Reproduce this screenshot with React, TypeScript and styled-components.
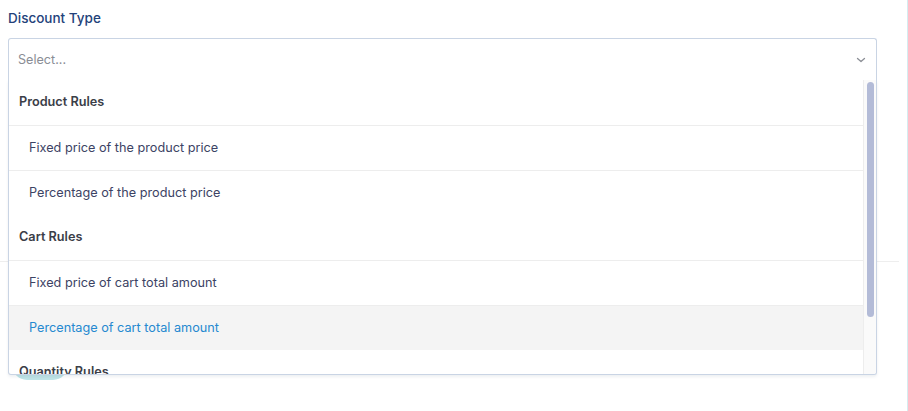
import styled, { createGlobalStyle } from "styled-components";

const GlobalStyle = createGlobalStyle`
  html, body {
    margin: 0;
    padding: 0;
    background: #ffffff;
  }
  body {
    font-family: Inter, "Liberation Sans", Arial, sans-serif;
    -webkit-font-smoothing: antialiased;
  }
`;

const Page = styled.div`
  width: 908px;
  height: 411px;
  box-sizing: border-box;
  padding: 8px 0 0 8px;
  border-right: 1px solid #d5ecf0;
  overflow: hidden;
`;

const Field = styled.div`
  width: 869px;
  display: flex;
  flex-direction: column;
  gap: 10px;
`;

const Label = styled.label`
  font-size: 13.5px;
  line-height: 20px;
  font-weight: 500;
  color: #23427a;
`;

const SelectWrap = styled.div`
  position: relative;
  z-index: 2;
`;

const Control = styled.div<{ open: boolean }>`
  height: 42px;
  box-sizing: border-box;
  display: flex;
  align-items: center;
  justify-content: space-between;
  padding: 0 10px 0 9px;
  border: 1px solid #c9d4e4;
  border-bottom: ${(p) => (p.open ? "none" : "1px solid #c9d4e4")};
  border-radius: ${(p) => (p.open ? "3px 3px 0 0" : "3px")};
  background: #ffffff;
`;

const Placeholder = styled.span`
  font-size: 12.6px;
  color: #8a8d95;
`;

const Chevron = styled.svg`
  width: 10px;
  height: 10px;
  color: #8c8f96;
`;

// dropdown panel lies over the form below it
const Menu = styled.div`
  position: absolute;
  top: 100%;
  left: 0;
  right: 0;
  height: 295px;
  box-sizing: border-box;
  display: flex;
  border: 1px solid #c9d4e4;
  border-top: none;
  border-radius: 0 0 3px 3px;
  background: #ffffff;
  box-shadow: 0 2px 3px rgba(40, 60, 90, 0.08);
  overflow: hidden;
`;

const MenuList = styled.div`
  flex: 1;
  overflow: hidden;
`;

const ScrollTrack = styled.div`
  width: 13px;
  box-sizing: border-box;
  padding: 2px 2px 0 3px;
  background: #fafafa;
  border-left: 1px solid #ededed;
`;

const ScrollThumb = styled.div<{ size: number }>`
  height: ${(p) => p.size}px;
  border-radius: 4px;
  background: #b3bbd7;
`;

const GroupHeading = styled.div`
  height: 45px;
  box-sizing: border-box;
  display: flex;
  align-items: center;
  padding: 0 0 2px 10px;
  font-size: 12.7px;
  font-weight: 600;
  color: #3b3e48;
`;

const Option = styled.div<{ active?: boolean }>`
  height: 45px;
  box-sizing: border-box;
  display: flex;
  align-items: center;
  padding: 0 0 2px 20px;
  border-top: 1px solid #ededed;
  font-size: 12.7px;
  color: ${(p) => (p.active ? "#2589d0" : "#3c4364")};
  background: ${(p) => (p.active ? "#f4f4f4" : "#ffffff")};
`;

const Behind = styled.div`
  display: flex;
  flex-direction: column;
  margin-left: -8px;
`;

const SectionRule = styled.hr`
  margin: 181px 0 0 0;
  border: none;
  border-top: 1px solid #eeeeee;
  width: 899px;
`;

const SaveButton = styled.div`
  margin: 88px 0 0 12px;
  width: 56px;
  height: 30px;
  border-radius: 15px;
  background: #bfe4e7;
`;

const groups = [
  {
    label: "Product Rules",
    options: ["Fixed price of the product price", "Percentage of the product price"],
  },
  {
    label: "Cart Rules",
    options: ["Fixed price of cart total amount", "Percentage of cart total amount"],
  },
  {
    label: "Quantity Rules",
    options: ["Bulk quantity discount"],
  },
];

export default function App() {
  const activeOption = "Percentage of cart total amount";
  return (
    <>
      <GlobalStyle />
      <Page>
        <Field>
          <Label>Discount Type</Label>
          <SelectWrap>
            <Control open>
              <Placeholder>Select...</Placeholder>
              <Chevron viewBox="0 0 10 10" fill="none">
                <path
                  d="M1.5 3.5 L5 6.5 L8.5 3.5"
                  stroke="currentColor"
                  strokeWidth="1.3"
                  strokeLinecap="round"
                  strokeLinejoin="round"
                />
              </Chevron>
            </Control>
            <Menu>
              <MenuList>
                {groups.map((group) => (
                  <div key={group.label}>
                    <GroupHeading>{group.label}</GroupHeading>
                    {group.options.map((opt) => (
                      <Option key={opt} active={opt === activeOption}>
                        {opt}
                      </Option>
                    ))}
                  </div>
                ))}
              </MenuList>
              <ScrollTrack>
                <ScrollThumb size={235} />
              </ScrollTrack>
            </Menu>
          </SelectWrap>
        </Field>
        <Behind>
          <SectionRule />
          <SaveButton />
        </Behind>
      </Page>
    </>
  );
}
